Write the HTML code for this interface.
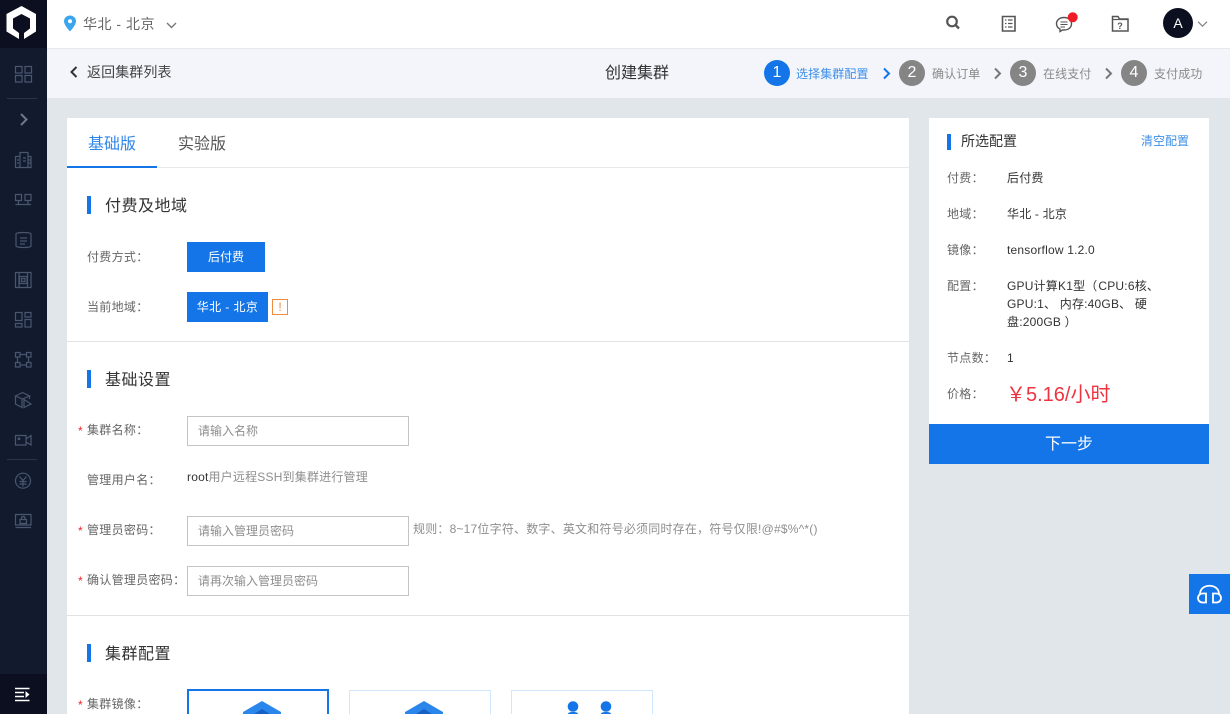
<!DOCTYPE html>
<html lang="zh-CN">
<head>
<meta charset="utf-8">
<title>创建集群</title>
<style>
html,body{margin:0;padding:0;width:1230px;height:714px;overflow:hidden;background:#e1e6ea;}
body{font-family:"Liberation Sans","Noto Sans CJK SC",sans-serif;position:relative;color:#333;}
.a{position:absolute;white-space:nowrap;}
.t{position:absolute;white-space:nowrap;line-height:20px;height:20px;}
.lab{font-size:12px;letter-spacing:.3px;color:#666;}
.sec{font-size:16px;letter-spacing:.5px;color:#333;line-height:24px;height:24px;}
.bar{position:absolute;width:4px;height:18px;background:#1475e8;}
.inp{position:absolute;left:187px;width:220px;height:28px;border:1px solid #c4c4c4;background:#fff;font-size:12px;line-height:28px;color:#8e8e8e;text-indent:10px;}
.star{position:absolute;left:78px;color:#f5222d;font-size:12px;line-height:12px;}
.btn{position:absolute;background:#1475e8;color:#fff;font-size:12px;text-align:center;}
.circle{position:absolute;top:60px;width:26px;height:26px;border-radius:50%;background:#858585;color:#fff;font-size:16px;line-height:26px;text-align:center;}
.st{position:absolute;top:64px;font-size:12px;line-height:20px;color:#8a8a8a;white-space:nowrap;letter-spacing:.1px;}
.side{fill:none;stroke:#4a556e;stroke-width:1.2;}
.hr{position:absolute;left:67px;width:842px;height:1px;background:#dfe3e6;}
.rl{position:absolute;left:947px;font-size:12px;line-height:18px;color:#666;white-space:nowrap;letter-spacing:.3px;}
.rv{position:absolute;left:1007px;font-size:12px;line-height:18px;color:#333;white-space:nowrap;letter-spacing:.2px;}
</style>
</head>
<body>
<!-- sidebar -->
<div class="a" style="left:0;top:0;width:47px;height:714px;background:#121a2e;"></div>
<div class="a" style="left:0;top:0;width:47px;height:48px;background:#0b0f1f;"></div>
<div class="a" style="left:0;top:674px;width:47px;height:40px;background:#0b0f1f;"></div>
<div class="a" style="left:7px;top:98px;width:30px;height:1px;background:#2a3347;"></div>
<div class="a" style="left:7px;top:459px;width:30px;height:1px;background:#2a3347;"></div>
<svg class="a" style="left:0;top:0;" width="47" height="714" viewBox="0 0 47 714">
<path fill="#fff" d="M21.500 6L36 14V31.500L24 39V33L30 28.500V18.500L21.500 14L13 18.500V28.500L19 33V39L6.500 31.500V14Z"/>
<g class="side">
<path d="M15.500 66.500h6.500v6.500h-6.500zM25 66.500h6.500v6.500h-6.500zM15.500 75.500h6.500v6.500h-6.500zM25 75.500h6.500v6.500h-6.500z"/>
<path d="M21 114l5.500 5.500L21 125" stroke="#6d7990" stroke-width="2"/>
<path d="M15.500 167.500v-11h4.500v-4h8v4h3v11zM20 167.500v-11M28 167.500v-11M23 158h3M23 161h3M17 160h2M17 163h2M28 160h3M28 163h3"/>
<path d="M15.500 194.500h6v6h-6zM25 194.500h6v6h-6zM18.500 200.500v4M28 200.500v4M15.500 204.500h15.500"/>
<path d="M16 234c0-2 15-2 15 0v12c0 2-15 2-15 0zM20 238h7M20 241h7M20 244h5"/>
<path d="M15.500 272.500h15.500v15h-15.500zM19.500 276.500h7.500v7h-7.500zM21.500 278.500h3.500v3h-3.500zM19 272.500v15M27.500 272.500v15"/>
<path d="M15.500 312.500h6.500v8h-6.500zM25 312.500h6v4.500h-6zM25 319.500h6v7.500h-6zM15.500 323.500h6.500v3.500h-6.500z"/>
<path d="M15.500 352.500h4.500v4.500h-4.500zM26.500 352.500h4.500v4.500h-4.500zM15.500 362.500h4.500v4.500h-4.500zM26.500 362.500h4.500v4.500h-4.500zM20 354.500h6.500M20 365h6.500M17.500 357v5.500M28.500 357v5.500"/>
<path d="M15.500 396l7-3.500 7 3.500-7 3zM15.500 396v8l6.500 3.500v-8M24 399.500v8l7-3.500-7-4.500zM29.500 396v3"/>
<path d="M15.500 435.500h10.500v9.500h-10.500zM26 439l5-3.500v9.500l-5-3z"/>
<circle cx="19" cy="438.800" r=".8"/>
<circle cx="23" cy="480.700" r="7.500"/>
<path d="M19.500 476.500l3.500 4 3.500-4M23 480.500v6M19.500 481.500h7M19.500 484h7"/>
<path d="M15.500 514.500h15.500v10.500h-15.500zM15.500 527.500h15.500M20 519.500h6.500v4h-6.500zM21.500 519.500v-1.500c0-2 3.500-2 3.500 0v1.500"/>
</g>
<path stroke="#fff" stroke-width="1.500" fill="none" d="M15 688.500h14.500M15 692.500h9M15 696.500h9M15 700.500h14.500"/>
<path fill="#fff" d="M25.500 691l4 3.500-4 3.500z"/>
</svg>

<!-- top bar -->
<div class="a" style="left:47px;top:0;width:1183px;height:48px;background:#fff;border-bottom:1px solid #e6e8ec;"></div>
<svg class="a" style="left:63px;top:15px;" width="14" height="17" viewBox="0 0 14 17"><path fill="#3ba5ee" d="M7 .5c3.300 0 6 2.500 6 5.800 0 4-6 10.200-6 10.200S1 10.300 1 6.300C1 3 3.700.5 7 .5z"/><circle cx="7" cy="6.300" r="2" fill="#fff"/></svg>
<div class="t" style="left:83px;top:14px;font-size:14px;color:#666;letter-spacing:.5px;">华北 - 北京</div>
<svg class="a" style="left:165px;top:21px;" width="13" height="9" viewBox="0 0 13 9"><path d="M2 2l4.500 4.500L11 2" fill="none" stroke="#777" stroke-width="1.400"/></svg>
<svg class="a" style="left:940px;top:10px;" width="270" height="28" viewBox="0 0 270 28">
<circle cx="12" cy="11.500" r="4.800" fill="none" stroke="#555" stroke-width="2.200"/><path d="M15.500 15l3.500 3.500" stroke="#555" stroke-width="2.400"/>
<path d="M62.500 6.500h12.500v14.500h-12.500z" fill="none" stroke="#555" stroke-width="1.600"/><path d="M65 10h1.500M65 13.500h1.500M65 17h1.500M68 10h4.500M68 13.500h4.500M68 17h4.500" stroke="#555" stroke-width="1.300"/>
<path d="M124 7.500c4.500 0 7.500 2.700 7.500 6.300s-3 6.200-7.500 6.200h-1.500l-2.500 1.500v-2.500c-2.300-1-3.500-3.200-3.500-5.200 0-3.600 3-6.300 7.500-6.300z" fill="none" stroke="#555" stroke-width="1.400"/><path d="M120.500 12h7M120.500 14.500h7M120.500 17h4.500" stroke="#555" stroke-width="1.100"/>
<circle cx="132.700" cy="7.300" r="5" fill="#ee1c25"/>
<path d="M172.500 21v-14.500h5.500l1.500 2.500h8.500v12z" fill="none" stroke="#555" stroke-width="1.500"/><path d="M172.500 9.500h15" stroke="#555" stroke-width="1.200"/>
<text x="180" y="19" font-family="Liberation Sans" font-size="9" font-weight="700" fill="#555" text-anchor="middle">?</text>
<path d="M258 11.700l4.500 4.500 4.500-4.500" fill="none" stroke="#888" stroke-width="1.300"/>
</svg>
<div class="a" style="left:1163px;top:8px;width:30px;height:30px;border-radius:50%;background:#0b0f1f;color:#fff;font-size:14px;line-height:30px;text-align:center;">A</div>

<!-- sub bar -->
<div class="a" style="left:47px;top:49px;width:1183px;height:49px;background:#f3f5fb;"></div>
<svg class="a" style="left:68px;top:65px;" width="12" height="14" viewBox="0 0 12 14"><path d="M8.500 2L3.500 7l5 5" fill="none" stroke="#333" stroke-width="2"/></svg>
<div class="t" style="left:87px;top:62px;font-size:14px;color:#444;letter-spacing:.1px;">返回集群列表</div>
<div class="t" style="left:605px;top:63px;font-size:16px;color:#333;line-height:22px;height:22px;">创建集群</div>
<div class="circle" style="left:764px;background:#1475e8;">1</div>
<div class="st" style="left:796px;color:#3d8fe9;">选择集群配置</div>
<svg class="a" style="left:882px;top:67px;" width="10" height="13" viewBox="0 0 10 13"><path d="M2 1.500l5 5-5 5" fill="none" stroke="#1475e8" stroke-width="2"/></svg>
<div class="circle" style="left:899px;">2</div>
<div class="st" style="left:932px;">确认订单</div>
<svg class="a" style="left:993px;top:67px;" width="10" height="13" viewBox="0 0 10 13"><path d="M2 1.500l5 5-5 5" fill="none" stroke="#777" stroke-width="2"/></svg>
<div class="circle" style="left:1010px;">3</div>
<div class="st" style="left:1043px;">在线支付</div>
<svg class="a" style="left:1104px;top:67px;" width="10" height="13" viewBox="0 0 10 13"><path d="M2 1.500l5 5-5 5" fill="none" stroke="#777" stroke-width="2"/></svg>
<div class="circle" style="left:1121px;">4</div>
<div class="st" style="left:1154px;">支付成功</div>

<!-- main card -->
<div class="a" style="left:67px;top:118px;width:842px;height:596px;background:#fff;"></div>
<div class="a" style="left:67px;top:167px;width:842px;height:1px;background:#e6e8ec;"></div>
<div class="a" style="left:67px;top:166px;width:90px;height:2px;background:#1475e8;"></div>
<div class="t" style="left:88px;top:134px;font-size:16px;color:#2f86ea;line-height:22px;height:22px;">基础版</div>
<div class="t" style="left:178px;top:134px;font-size:16px;color:#555;line-height:22px;height:22px;">实验版</div>

<div class="bar" style="left:87px;top:196px;"></div>
<div class="t sec" style="left:105px;top:195px;">付费及地域</div>
<div class="t lab" style="left:87px;top:247px;">付费方式&#xFF1A;</div>
<div class="btn" style="left:187px;top:242px;width:78px;height:30px;line-height:30px;">后付费</div>
<div class="t lab" style="left:87px;top:297px;">当前地域&#xFF1A;</div>
<div class="btn" style="left:187px;top:292px;width:81px;height:30px;line-height:30px;letter-spacing:.4px;">华北 - 北京</div>
<div class="a" style="left:272px;top:299px;width:14px;height:14px;border:1px solid #f08a3c;color:#f08a3c;font-size:12px;line-height:15px;text-align:center;">!</div>

<div class="hr" style="top:341px;"></div>
<div class="bar" style="left:87px;top:370px;"></div>
<div class="t sec" style="left:105px;top:369px;">基础设置</div>

<div class="star" style="top:425px;">*</div>
<div class="t lab" style="left:87px;top:420px;">集群名称&#xFF1A;</div>
<div class="inp" style="top:416px;">请输入名称</div>

<div class="t lab" style="left:87px;top:470px;">管理用户名&#xFF1A;</div>
<div class="t" style="left:187px;top:467px;font-size:12px;color:#8e8e8e;letter-spacing:.2px;"><span style="color:#333;">root</span>用户远程SSH到集群进行管理</div>

<div class="star" style="top:525px;">*</div>
<div class="t lab" style="left:87px;top:520px;">管理员密码&#xFF1A;</div>
<div class="inp" style="top:516px;">请输入管理员密码</div>
<div class="t" style="left:413px;top:519px;font-size:12px;color:#8e8e8e;letter-spacing:.2px;">规则&#xFF1A;8~17位字符、数字、英文和符号必须同时存在&#xFF0C;符号仅限!@#$%^*()</div>

<div class="star" style="top:575px;">*</div>
<div class="t lab" style="left:87px;top:570px;">确认管理员密码&#xFF1A;</div>
<div class="inp" style="top:566px;">请再次输入管理员密码</div>

<div class="hr" style="top:615px;"></div>
<div class="bar" style="left:87px;top:644px;"></div>
<div class="t sec" style="left:105px;top:643px;">集群配置</div>

<div class="star" style="top:699px;">*</div>
<div class="t lab" style="left:87px;top:694px;">集群镜像&#xFF1A;</div>
<div class="a" style="left:187px;top:689px;width:138px;height:40px;border:2px solid #1475e8;"></div>
<div class="a" style="left:349px;top:690px;width:140px;height:40px;border:1px solid #cfe6fb;"></div>
<div class="a" style="left:511px;top:690px;width:140px;height:40px;border:1px solid #cfe6fb;"></div>
<svg class="a" style="left:187px;top:689px;" width="470" height="25" viewBox="0 0 470 25">
<path fill="#2b86ec" d="M75 12l19 11v2H56v-2z"/><path fill="#1560c4" d="M75 20l8 5H67z"/>
<path fill="#2b86ec" d="M237 12l19 11v2h-38v-2z"/><path fill="#1560c4" d="M237 20l8 5h-16z"/>
<circle cx="386" cy="17.500" r="5.300" fill="#1475e8"/><circle cx="419" cy="17.500" r="5.300" fill="#1475e8"/>
<path fill="#1475e8" d="M381 25c0-1.500 2-2 5-2s5 .5 5 2zM414 25c0-1.500 2-2 5-2s5 .5 5 2z"/>
</svg>

<!-- right card -->
<div class="a" style="left:929px;top:118px;width:280px;height:346px;background:#fff;"></div>
<div class="a" style="left:947px;top:134px;width:4px;height:16px;background:#1475e8;"></div>
<div class="t" style="left:961px;top:130px;font-size:14px;color:#333;line-height:22px;height:22px;">所选配置</div>
<div class="t" style="left:1141px;top:131px;font-size:12px;color:#3d8fe9;">清空配置</div>
<div class="rl" style="top:169px;">付费&#xFF1A;</div><div class="rv" style="top:169px;">后付费</div>
<div class="rl" style="top:205px;">地域&#xFF1A;</div><div class="rv" style="top:205px;">华北 - 北京</div>
<div class="rl" style="top:241px;">镜像&#xFF1A;</div><div class="rv" style="top:241px;">tensorflow 1.2.0</div>
<div class="rl" style="top:277px;">配置&#xFF1A;</div>
<div class="rv" style="top:277px;">GPU计算K1型<span style="letter-spacing:-2.500px;">&#xFF08;</span> CPU:6核、</div>
<div class="rv" style="top:295px;">GPU:1、 内存:40GB、 硬</div>
<div class="rv" style="top:313px;">盘:200GB &#xFF09;</div>
<div class="rl" style="top:349px;">节点数&#xFF1A;</div><div class="rv" style="top:349px;">1</div>
<div class="rl" style="top:385px;">价格&#xFF1A;</div>
<div class="t" style="left:1006px;top:382px;font-size:20px;color:#ee3440;line-height:26px;height:26px;">&#xFFE5;5.16/小时</div>
<div class="a" style="left:929px;top:424px;width:280px;height:40px;background:#1475e8;"></div>
<div class="a" style="left:929px;top:426px;width:280px;height:38px;color:#fff;font-size:16px;line-height:38px;text-align:center;">下一步</div>

<!-- float -->
<div class="a" style="left:1189px;top:574px;width:41px;height:40px;background:#1475e8;"></div>
<svg class="a" style="left:1189px;top:574px;" width="41" height="40" viewBox="0 0 41 40">
<path d="M11 20c0-11 19-11 19 0" fill="none" stroke="#fff" stroke-width="1.800"/>
<path d="M17 19.500v9h-3.500a4.500 4.500 0 0 1 0-9zM24 19.500v9h3.500a4.500 4.500 0 0 0 0-9z" fill="none" stroke="#fff" stroke-width="1.800"/>
</svg>
</body>
</html>
